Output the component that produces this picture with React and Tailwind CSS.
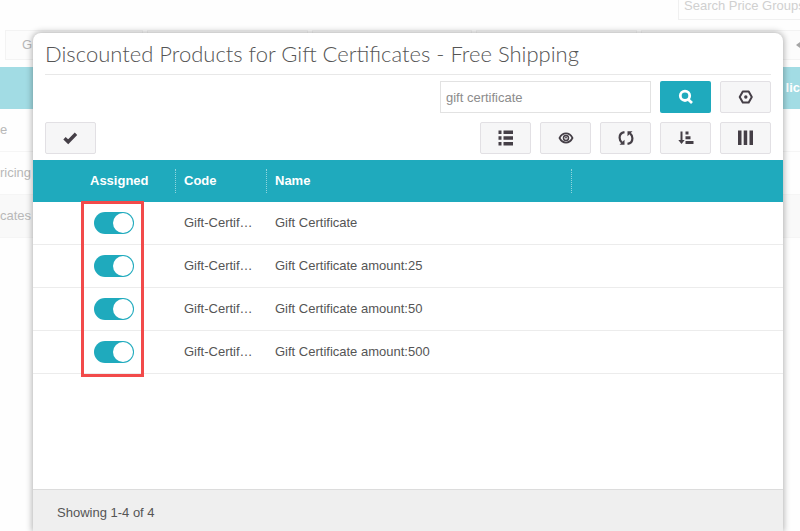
const PRODUCTS = [
  { id: 1, code: 'Gift-Certif…', name: 'Gift Certificate' },
  { id: 2, code: 'Gift-Certif…', name: 'Gift Certificate amount:25' },
  { id: 3, code: 'Gift-Certif…', name: 'Gift Certificate amount:50' },
  { id: 4, code: 'Gift-Certif…', name: 'Gift Certificate amount:500' },
]

function ListIcon() {
  return (
    <svg width="16" height="16" viewBox="0 0 16 16" fill="currentColor">
      <path d="M0.500 0.500h3v3.500h-3zM5.500 0.500h9.500v3.500H5.500zM0.500 6.200h3v3.500h-3zM5.500 6.200h9.500v3.500H5.500zM0.500 12h3v3.500h-3zM5.500 12h9.500v3.500H5.500z" />
    </svg>
  )
}

function EyeIcon() {
  return (
    <svg width="16" height="16" viewBox="0 0 16 16" fill="none" stroke="currentColor" strokeWidth="1.700">
      <path d="M1.500 8C3 5 5.200 3.400 8 3.400S13 5 14.500 8c-1.500 3-3.700 4.600-6.500 4.600S3 11 1.500 8z" />
      <circle cx="8" cy="8" r="2.500" strokeWidth="1.500" />
      <circle cx="8" cy="7.500" r="0.900" fill="currentColor" stroke="none" />
    </svg>
  )
}

function RefreshIcon() {
  return (
    <svg width="16" height="16" viewBox="0 0 16 16" fill="none" stroke="currentColor" strokeWidth="2.200">
      <path d="M6.500 2.200C3.400 2.600 1.600 5 1.600 7.800c0 2 .9 3.700 2.400 4.900" />
      <path d="M9.500 13.800c3.100-.4 4.900-2.800 4.900-5.600 0-2-.9-3.700-2.400-4.900" />
      <path d="M1.500 14.700h5v-5zM14.500 1.300h-5v5z" fill="currentColor" stroke="none" />
    </svg>
  )
}

function SortIcon() {
  return (
    <svg width="16" height="16" viewBox="0 0 16 16" fill="currentColor">
      <path d="M2.500 1.500h2v8.500h2.200L3.500 14 .3 10h2.200zM7.500 1.500h3v3h-3zM7.500 6.200h5v3h-5zM7.500 11h8v3h-8z" />
    </svg>
  )
}

function ColumnsIcon() {
  return (
    <svg width="16" height="16" viewBox="0 0 16 16" fill="currentColor">
      <path d="M0 0.500h3.500v14.500H0zM5.700 0.500h3.500v14.500H5.700zM11.500 0.500H15v14.500h-3.500z" />
    </svg>
  )
}

function SettingsIcon() {
  return (
    <svg width="16" height="16" viewBox="0 0 16 16" fill="none" stroke="currentColor" strokeWidth="2">
      <path d="M4.800 2.500h5.900L13.800 8l-3.100 5.500H4.800L1.700 8z" strokeLinejoin="round" />
      <circle cx="7.800" cy="8" r="1.700" fill="currentColor" stroke="none" />
    </svg>
  )
}

function SearchIcon() {
  return (
    <svg width="16" height="16" viewBox="0 0 16 16" fill="none" stroke="currentColor" strokeWidth="2.800">
      <circle cx="7" cy="6.800" r="4.700" />
      <path d="M9.500 9.800l4.500 4.200" />
    </svg>
  )
}

function CheckIcon() {
  return (
    <svg width="15" height="14" viewBox="0 0 15 14" fill="none" stroke="currentColor" strokeWidth="3.400">
      <path d="M1.500 7.200L5.200 10.800 13 2.800" />
    </svg>
  )
}

function ToolButton({ label, children }) {
  return (
    <button
      type="button"
      aria-label={label}
      className="flex h-8 w-[51px] items-center justify-center rounded-xs border border-[#e2e0e4] bg-[#f6f6f7] text-[#453f47]"
    >
      {children}
    </button>
  )
}

// Price group list that stays faded behind the dialog
function PriceGroups() {
  return (
    <div className="text-[13px] text-[#b8b8b8]">
      <div className="flex h-[30px] justify-end">
        <input
          aria-label="Search price groups"
          placeholder="Search Price Groups"
          className="-mr-3 h-5 w-[134px] border border-t-0 border-[#f0f0f0] px-[5px] pb-2 outline-none placeholder:text-[#d0d0d0]"
        />
      </div>
      <div className="flex h-[37px] gap-1 pl-[5px]">
        <button type="button" className="h-[30px] w-[138px] border border-[#f3f3f3] bg-[#fcfcfc] px-4 text-left">G</button>
        <div className="h-[30px] flex-1 border border-[#f3f3f3] bg-[#fcfcfc]" />
        <div className="h-[30px] flex-1 border border-[#f3f3f3] bg-[#fcfcfc]" />
        <div className="h-[30px] flex-1 border border-[#f3f3f3] bg-[#fcfcfc]" />
        <div className="flex h-[30px] flex-1 items-center justify-end border border-r-0 border-[#f3f3f3] bg-[#fcfcfc]">
          <svg width="4" height="6" viewBox="0 0 4 6" fill="#a5a5a5">
            <path d="M4 0v6L0 3z" />
          </svg>
        </div>
      </div>
      <div className="flex h-[42px] items-center justify-end bg-[#a2dce4] font-bold text-white">lic</div>
      <div className="flex h-[43px] items-center border-b border-[#f5f5f5]">e</div>
      <div className="flex h-[43px] items-center border-b border-[#f5f5f5]">ricing</div>
      <div className="flex h-[43px] items-center border-b border-[#f5f5f5] bg-[#f9f9f9]">cates</div>
    </div>
  )
}

export default function App() {
  return (
    <div className="relative min-h-screen overflow-hidden bg-[#fefefe] font-['Liberation_Sans',Arial,sans-serif]">
      <PriceGroups />

      <div className="absolute inset-0 flex pt-[33px] pr-[17px] pl-[33px]">
        <div
          role="dialog"
          aria-labelledby="dialog-title"
          className="flex min-w-0 flex-1 flex-col rounded-t-lg bg-white shadow-[0_0_6px_1px_rgba(0,0,0,0.3)]"
        >
          <div className="flex flex-col px-3">
            <h1
              id="dialog-title"
              className="h-[42px] border-b border-[#e8e8e8] font-['Lato',sans-serif] text-[22px] leading-[42px] font-light whitespace-nowrap text-[#555]"
            >
              Discounted Products for Gift Certificates - Free Shipping
            </h1>
            <div className="mt-[6px] flex justify-end gap-[9px]">
              <input
                aria-label="Search products"
                defaultValue="gift certificate"
                className="h-8 w-[211px] border border-[#e2e2e2] px-[5px] text-[13px] text-[#8c8c8c] outline-none"
              />
              <button
                type="button"
                aria-label="Search"
                className="flex h-8 w-[51px] items-center justify-center rounded-xs bg-[#1faabd] text-white"
              >
                <SearchIcon />
              </button>
              <ToolButton label="Settings"><SettingsIcon /></ToolButton>
            </div>
            <div className="mt-[9px] mb-[6px] flex gap-[9px]">
              <div className="flex-1">
                <ToolButton label="Apply"><CheckIcon /></ToolButton>
              </div>
              <ToolButton label="List view"><ListIcon /></ToolButton>
              <ToolButton label="Preview"><EyeIcon /></ToolButton>
              <ToolButton label="Refresh"><RefreshIcon /></ToolButton>
              <ToolButton label="Sort"><SortIcon /></ToolButton>
              <ToolButton label="Columns"><ColumnsIcon /></ToolButton>
            </div>
          </div>

          <div className="relative flex-1">
            <table className="w-full table-fixed border-separate border-spacing-0 text-left text-[13px] text-[#555]">
              <thead>
                <tr className="h-[42px] bg-[#1faabd] text-white">
                  <th className="w-[49px]" />
                  <th className="w-[94px] pl-2">
                    <div className="flex h-6 items-center border-r border-dotted border-[#8fd5de]">Assigned</div>
                  </th>
                  <th className="w-[91px] pl-2">
                    <div className="flex h-6 items-center border-r border-dotted border-[#8fd5de]">Code</div>
                  </th>
                  <th className="w-[305px] pl-2">
                    <div className="flex h-6 items-center border-r border-dotted border-[#8fd5de]">Name</div>
                  </th>
                  <th />
                </tr>
              </thead>
              <tbody>
                {PRODUCTS.map((p) => (
                  <tr key={p.id} className="h-[43px] *:border-b *:border-[#ececec]">
                    <td />
                    <td className="pl-3">
                      <input
                        type="checkbox"
                        role="switch"
                        defaultChecked
                        aria-label={`Assign ${p.name}`}
                        className="flex h-[22px] w-10 appearance-none items-center justify-end rounded-full bg-[#1faabd] px-px before:size-5 before:rounded-full before:bg-white"
                      />
                    </td>
                    <td className="pl-2">{p.code}</td>
                    <td className="pl-2">{p.name}</td>
                    <td />
                  </tr>
                ))}
              </tbody>
            </table>
            {/* highlight around the switches */}
            <div className="pointer-events-none absolute top-[41px] left-12 h-44 w-[63px] border-3 border-[#f24a4a]" />
          </div>

          <div className="h-[42px] border-t border-[#dcdcdc] bg-[#efefef] px-6 text-[13px] leading-[46px] text-[#555]">
            Showing 1-4 of 4
          </div>
        </div>
      </div>
    </div>
  )
}
